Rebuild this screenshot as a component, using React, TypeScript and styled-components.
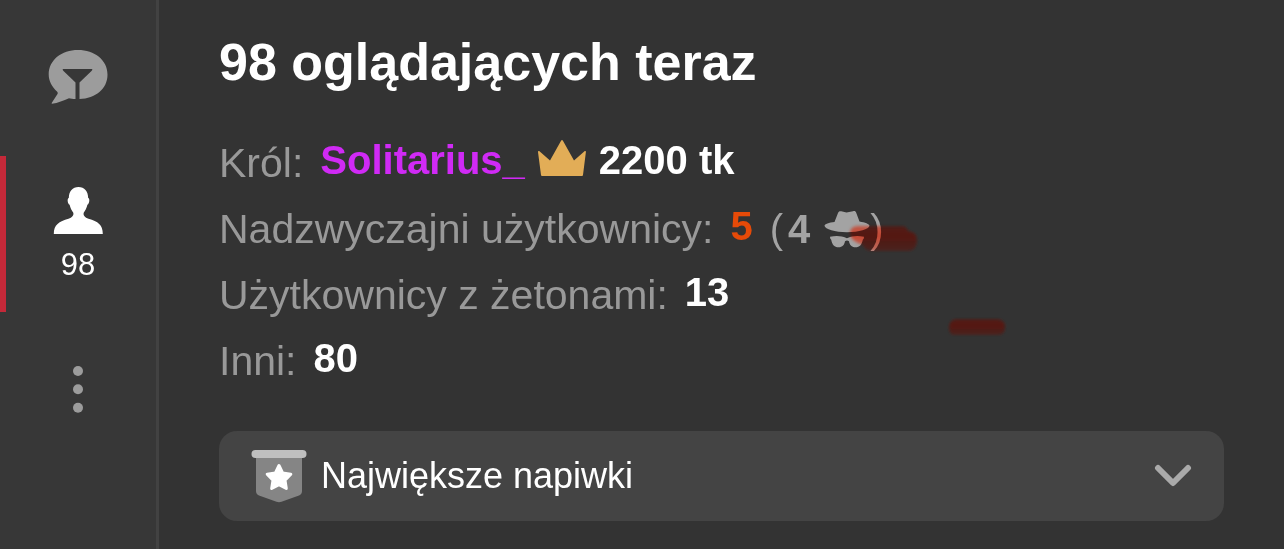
import React from "react";
import styled, { createGlobalStyle } from "styled-components";

const GlobalStyle = createGlobalStyle`
  *, *::before, *::after { box-sizing: border-box; }
  body {
    margin: 0;
    background: #333333;
    font-family: "Liberation Sans", Arial, sans-serif;
  }
`;

const Layout = styled.div`
  display: flex;
  min-height: 100vh;
  background: #333333;
`;

const Sidebar = styled.nav`
  flex: 0 0 159px;
  display: flex;
  flex-direction: column;
  background: #373737;
  border-right: 3px solid #424242;
`;

const SidebarButton = styled.button<{ $active?: boolean }>`
  display: flex;
  flex-direction: column;
  align-items: center;
  justify-content: center;
  gap: 14px;
  height: 156px;
  padding: 0 6px 0 0;
  border: 0;
  border-left: 6px solid ${(p) => (p.$active ? "#c42939" : "transparent")};
  background: none;
  color: ${(p) => (p.$active ? "#ffffff" : "#9c9c9c")};
  font: 400 31px/32px "Liberation Sans", Arial, sans-serif;
  cursor: pointer;
`;

const Panel = styled.main`
  position: relative;
  flex: 1;
  min-width: 0;
  padding: 32px 60px 28px;
`;

const Title = styled.h1`
  margin: 0;
  font-size: 52px;
  line-height: 60px;
  font-weight: 700;
  color: #ffffff;
`;

const Stats = styled.dl`
  margin: 43px 0 32px;
`;

const StatRow = styled.div`
  display: flex;
  align-items: flex-end;
  height: 66px;
  padding-bottom: 14px;
  white-space: nowrap;
`;

const StatLabel = styled.dt`
  font-size: 41px;
  line-height: 48px;
  color: #999999;
`;

const StatValue = styled.dd`
  display: flex;
  align-items: center;
  gap: 12px;
  margin: 0 0 3px 17px;
  font-size: 40px;
  line-height: 48px;
  font-weight: 700;
  color: #ffffff;
`;

const UserName = styled.a`
  color: #d02af5;
  text-decoration: none;
`;

const Accent = styled.span`
  color: #e64a08;
`;

const StatNote = styled.dd`
  display: flex;
  align-items: center;
  margin: 0 0 0 17px;
  font-size: 40px;
  line-height: 48px;
  font-weight: 700;
  color: #a3a3a3;
`;

const Paren = styled.span`
  font-weight: 400;
`;

const HiddenCount = styled.span`
  margin: 0 14px 0 5px;
`;

const Accordion = styled.button`
  display: flex;
  align-items: center;
  width: 100%;
  height: 90px;
  padding: 0 32px;
  border: 0;
  border-radius: 18px;
  background: #444444;
  color: #ffffff;
  font: 400 36px/44px "Liberation Sans", Arial, sans-serif;
  text-align: left;
  cursor: pointer;
`;

const AccordionLabel = styled.span`
  flex: 1;
  margin-left: 14px;
`;

const Ink = styled.svg<{ $x: number; $y: number; $blend: string }>`
  position: absolute;
  left: ${(p) => p.$x}px;
  top: ${(p) => p.$y}px;
  mix-blend-mode: ${(p) => p.$blend};
  pointer-events: none;
`;

const ChatFilterIcon = () => (
  <svg width="60" height="56" viewBox="0 0 60 56" aria-hidden="true">
    <path
      fill="#9c9c9c"
      d="M30 0C46.500 0 59.500 10 59.500 24.500C59.500 39 47.500 48.500 31.500 49V32.500L43.500 21C45 19.500 44.500 19 43 19H16C14.500 19 14 19.500 15.500 21L27.500 32.500V49C25 49 22.500 48.500 21 48.200C15.500 50.500 10 53 4 53.700C3.500 53.700 3.500 53 4 52.500L9.500 44C10 43 9.800 42.500 9 41.500C4 37 .7 31 .7 24.500C.7 10 13.500 0 30 0Z"
    />
  </svg>
);

const PersonIcon = () => (
  <svg width="50" height="48" viewBox="0 0 50 48" aria-hidden="true">
    <path
      fill="#ffffff"
      d="M25.500 0C31.500 0 35 4 35.200 11C37 11 36.600 17 34.400 17.700C33.700 21 32.200 23.500 30.700 25.700C30 28.500 32 30.500 35.500 31.700C45 34.500 49.800 37.500 49.800 47H.8C.8 37.500 6 34.500 15.500 31.700C19 30.500 21 28.500 20.300 25.700C18.800 23.500 17.300 21 16.600 17.700C14.400 17 14 11 15.800 11C16 4 19.500 0 25.500 0Z"
    />
  </svg>
);

const DotsIcon = () => (
  <svg width="12" height="48" viewBox="0 0 12 48" fill="#9c9c9c" aria-hidden="true">
    <circle cx="6" cy="5" r="5" />
    <circle cx="6" cy="23.300" r="5" />
    <circle cx="6" cy="41.700" r="5" />
  </svg>
);

const CrownIcon = () => (
  <svg width="50" height="42" viewBox="0 0 50 42" aria-hidden="true">
    <path
      fill="#e2ad57"
      d="M24.200 1.500Q25 .5 25.800 1.500L37 21.500L47.800 12Q49 11.500 48.900 13L46 36Q45.900 37 45 37H5Q4.100 37 4 36L1 13Q1 11.500 2.200 12L13 21.500Z"
    />
  </svg>
);

const IncognitoIcon = () => (
  <svg width="46" height="38" viewBox="0 0 46 38" fill="#a3a3a3" aria-hidden="true">
    <path d="M10.500 12L14 3C14.700 1.300 15.500 1 17.200 1.300L22.500 2.500L29 1.200C31 .9 31.700 1.500 32.200 2.700L35.500 11.500C41 12.500 45.500 14 45.500 15.800C45 19.300 35 22.300 23 22.300C11 22.300 1 19.300 .5 15.800C.5 14 5 12.500 10.500 12Z" />
    <path d="M6 26.800C12 25.200 18 25.800 21.800 27.800Q23 28.500 24.200 27.800C28 25.800 34 25.200 40 26.800Q40.200 28.700 38.800 29.800C37.800 35 35.500 37.300 31.500 37.300C27.500 37.300 25.500 34.500 25 31.200Q23 29.700 21 31.200C20.500 34.500 18.500 37.300 14.500 37.300C10.500 37.300 8.200 35 7.200 29.800Q5.800 28.700 6 26.800Z" />
  </svg>
);

const BadgeIcon = () => (
  <svg width="56" height="54" viewBox="0 0 56 54" aria-hidden="true">
    <path fill="#858585" d="M5 7H51V42C51 44.500 50 45.500 48 46.500L30.500 52.800Q28 53.500 25.500 52.800L8 46.500C6 45.500 5 44.500 5 42Z" />
    <rect x=".5" y="1" width="55" height="8" rx="4" fill="#bfbfbf" />
    <path
      fill="#ffffff"
      stroke="#ffffff"
      strokeWidth="3"
      strokeLinejoin="round"
      d="M28 16.500L31.600 24L39.800 25.200L34 31.200L35.300 39.500L28 35.700L20.700 39.500L22 31.200L16.200 25.200L24.400 24Z"
    />
  </svg>
);

const ChevronIcon = () => (
  <svg width="38" height="24" viewBox="0 0 38 24" aria-hidden="true">
    <path d="M4 4L19 19L34 4" fill="none" stroke="#aaaaaa" strokeWidth="6" strokeLinecap="round" strokeLinejoin="round" />
  </svg>
);

const WIDE_STROKE =
  "M12 6H56Q62 6 63 11Q72 12 72 20Q72 30 64 31H28Q20 31 18 25Q5 21 5 13Q5 7 12 6Z";
const SHORT_STROKE =
  "M11 6H53Q60 7 60 14Q60 22 53 22H11Q4 23 4 15Q4 7 11 6Z";

/* A translucent marker stroke: one layer removes green and blue, the other adds red. */
const MarkerStroke = ({ id, x, y, path }: { id: string; x: number; y: number; path: string }) => (
  <>
    {[
      { blend: "multiply", color: "#ff7050" },
      { blend: "plus-lighter", color: "#220000" },
    ].map(({ blend, color }) => (
      <Ink key={blend} $x={x} $y={y} $blend={blend} width="80" height="36" viewBox="0 0 80 36" aria-hidden="true">
        <defs>
          <filter id={`${id}-${blend}-soft`}>
            <feGaussianBlur stdDeviation="1.400" />
          </filter>
          <linearGradient id={`${id}-${blend}-ink`} x1="0" y1="0" x2="0" y2="1">
            <stop offset="0" stopColor={color} stopOpacity=".8" />
            <stop offset=".4" stopColor={color} />
            <stop offset="1" stopColor={color} stopOpacity=".6" />
          </linearGradient>
        </defs>
        <path d={path} fill={`url(#${id}-${blend}-ink)`} filter={`url(#${id}-${blend}-soft)`} />
      </Ink>
    ))}
  </>
);

export default function App() {
  return (
    <>
      <GlobalStyle />
      <Layout>
        <Sidebar>
          <SidebarButton aria-label="Czat">
            <ChatFilterIcon />
          </SidebarButton>
          <SidebarButton $active>
            <PersonIcon />
            98
          </SidebarButton>
          <SidebarButton aria-label="Menu">
            <DotsIcon />
          </SidebarButton>
        </Sidebar>
        <Panel>
          <Title>98 oglądających teraz</Title>
          <Stats>
            <StatRow>
              <StatLabel>Król:</StatLabel>
              <StatValue>
                <UserName href="#">Solitarius_</UserName>
                <CrownIcon />
                2200 tk
              </StatValue>
            </StatRow>
            <StatRow>
              <StatLabel>Nadzwyczajni użytkownicy:</StatLabel>
              <StatValue>
                <Accent>5</Accent>
              </StatValue>
              <StatNote>
                <Paren>(</Paren>
                <HiddenCount>4</HiddenCount>
                <IncognitoIcon />
                <Paren>)</Paren>
              </StatNote>
            </StatRow>
            <StatRow>
              <StatLabel>Użytkownicy z żetonami:</StatLabel>
              <StatValue>13</StatValue>
            </StatRow>
            <StatRow>
              <StatLabel>Inni:</StatLabel>
              <StatValue>80</StatValue>
            </StatRow>
          </Stats>
          <Accordion aria-expanded="false">
            <BadgeIcon />
            <AccordionLabel>Największe napiwki</AccordionLabel>
            <ChevronIcon />
          </Accordion>
          <MarkerStroke id="wide" x={686} y={220} path={WIDE_STROKE} />
          <MarkerStroke id="short" x={786} y={313} path={SHORT_STROKE} />
        </Panel>
      </Layout>
    </>
  );
}
